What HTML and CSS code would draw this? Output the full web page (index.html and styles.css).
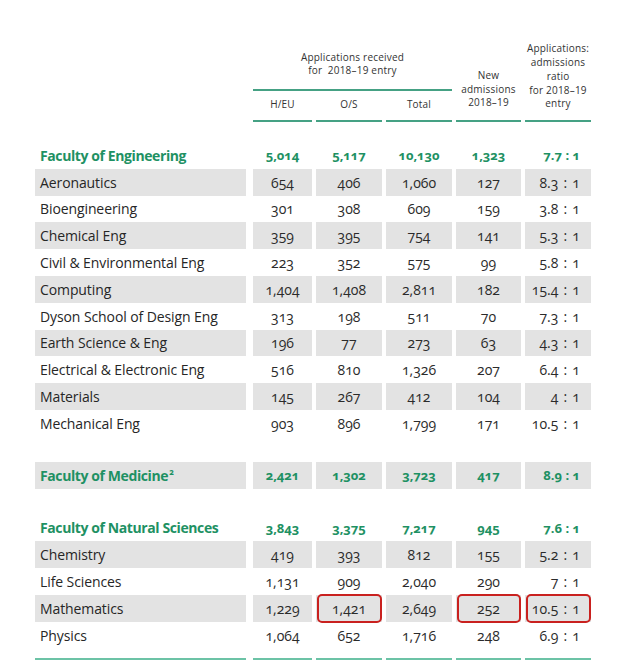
FILE: index.html
```html
<!DOCTYPE html>
<html>
<head>
<meta charset="utf-8">
<link rel="stylesheet" href="styles.css">
</head>
<body>
<div class="sheet">
  <div class="head">
    <div class="h-apps">Applications received<br>for&nbsp; 2018–19 entry</div>
    <div class="h-new">New<br>admissions<br>2018–19</div>
    <div class="h-ratio">Applications:<br>admissions<br>ratio<br>for 2018–19<br>entry</div>
    <div class="h-sub">H/EU</div>
    <div class="h-sub">O/S</div>
    <div class="h-sub">Total</div>
  </div>

  <div class="group first">
    <div class="row fac"><span class="lab">Faculty of Engineering</span><span>5,014</span><span>5,117</span><span>10,130</span><span>1,323</span><span class="r">7.7 : 1</span></div>
    <div class="row g"><span class="lab">Aeronautics</span><span>654</span><span>406</span><span>1,060</span><span>127</span><span class="r">8.3 : 1</span></div>
    <div class="row"><span class="lab">Bioengineering</span><span>301</span><span>308</span><span>609</span><span>159</span><span class="r">3.8 : 1</span></div>
    <div class="row g"><span class="lab">Chemical Eng</span><span>359</span><span>395</span><span>754</span><span>141</span><span class="r">5.3 : 1</span></div>
    <div class="row"><span class="lab">Civil &amp; Environmental Eng</span><span>223</span><span>352</span><span>575</span><span>99</span><span class="r">5.8 : 1</span></div>
    <div class="row g"><span class="lab">Computing</span><span>1,404</span><span>1,408</span><span>2,811</span><span>182</span><span class="r">15.4 : 1</span></div>
    <div class="row"><span class="lab">Dyson School of Design Eng</span><span>313</span><span>198</span><span>511</span><span>70</span><span class="r">7.3 : 1</span></div>
    <div class="row g"><span class="lab">Earth Science &amp; Eng</span><span>196</span><span>77</span><span>273</span><span>63</span><span class="r">4.3 : 1</span></div>
    <div class="row"><span class="lab">Electrical &amp; Electronic Eng</span><span>516</span><span>810</span><span>1,326</span><span>207</span><span class="r">6.4 : 1</span></div>
    <div class="row g"><span class="lab">Materials</span><span>145</span><span>267</span><span>412</span><span>104</span><span class="r">4 : 1</span></div>
    <div class="row"><span class="lab">Mechanical Eng</span><span>903</span><span>896</span><span>1,799</span><span>171</span><span class="r">10.5 : 1</span></div>
  </div>

  <div class="group med">
    <div class="row fac g"><span class="lab">Faculty of Medicine<sup>2</sup></span><span>2,421</span><span>1,302</span><span>3,723</span><span>417</span><span class="r">8.9 : 1</span></div>
  </div>

  <div class="group nat">
    <div class="row fac"><span class="lab">Faculty of Natural Sciences</span><span>3,843</span><span>3,375</span><span>7,217</span><span>945</span><span class="r">7.6 : 1</span></div>
    <div class="row g"><span class="lab">Chemistry</span><span>419</span><span>393</span><span>812</span><span>155</span><span class="r">5.2 : 1</span></div>
    <div class="row"><span class="lab">Life Sciences</span><span>1,131</span><span>909</span><span>2,040</span><span>290</span><span class="r">7 : 1</span></div>
    <div class="row g"><span class="lab">Mathematics</span><span>1,229</span><span class="mark">1,421</span><span>2,649</span><span class="mark">252</span><span class="r mark">10.5 : 1</span></div>
    <div class="row"><span class="lab">Physics</span><span>1,064</span><span>652</span><span>1,716</span><span>248</span><span class="r">6.9 : 1</span></div>
  </div>

  <div class="foot">
    <span class="blank"></span><span></span><span></span><span></span><span></span><span></span>
  </div>
</div>
</body>
</html>
```

FILE: styles.css
```css
html, body {
  margin: 0;
  padding: 0;
  background: #ffffff;
}

body {
  font-family: "Open Sans", "Noto Sans", sans-serif;
  color: #2b2b2b;
  width: 624px;
  height: 664px;
  overflow: hidden;
}

.sheet {
  padding: 40px 0 0 35px;
}

.head,
.row,
.foot {
  display: grid;
  grid-template-columns: 211px 62px 66px 66px 65px 66px;
  column-gap: 4px;
}

.head {
  grid-template-rows: 51px 31px;
  font-size: 10px;
  line-height: 13.7px;
  letter-spacing: 0.2px;
  text-align: center;
  color: #333;
}

.head > div {
  align-self: end;
}

.h-apps {
  grid-column: 2 / 5;
  grid-row: 1;
  margin-left: 3px;
  padding-bottom: 11px;
  border-bottom: 2px solid #45a184;
}

.h-new {
  grid-column: 5;
  grid-row: 1 / 3;
  padding-bottom: 10px;
  border-bottom: 2px solid #45a184;
}

.h-ratio {
  grid-column: 6;
  grid-row: 1 / 3;
  padding-bottom: 9px;
  border-bottom: 2px solid #45a184;
}

.h-sub {
  grid-row: 2;
  padding-bottom: 8px;
  border-bottom: 2px solid #45a184;
}

.h-sub:nth-of-type(4) {
  grid-column: 2;
  margin-left: 3px;
}

.h-sub:nth-of-type(5) {
  grid-column: 3;
}

.h-sub:nth-of-type(6) {
  grid-column: 4;
}

.group.first {
  margin-top: 20px;
}

.group.med {
  margin-top: 25px;
}

.group.nat {
  margin-top: 26px;
}

.row {
  height: 26.8px;
  font-size: 14px;
  font-variant-numeric: oldstyle-nums;
}

.row > span {
  display: flex;
  align-items: center;
  justify-content: center;
  position: relative;
}

.row > span:nth-child(2) {
  margin-left: 3px;
}

.row .lab {
  justify-content: flex-start;
  padding-left: 5px;
  font-size: 14px;
  letter-spacing: -0.1px;
  color: #262626;
}

.row .r {
  justify-content: flex-end;
  padding-right: 11px;
  word-spacing: 1.5px;
  white-space: pre;
}

.row.g > span {
  background: #e3e3e3;
}

.row.fac > span {
  color: #1e9163;
  font-weight: 700;
  font-size: 13px;
}

.row.fac > .r {
  word-spacing: 0;
}

.row.fac .lab {
  font-size: 14px;
  letter-spacing: -0.4px;
}

.row.fac sup {
  font-size: 8px;
  line-height: 0;
  margin-left: 1px;
  align-self: center;
  position: relative;
  top: -3px;
}

.mark::after {
  content: "";
  position: absolute;
  inset: -1px 0 -1px 1px;
  border: 2.5px solid #c9211f;
  border-radius: 5px;
}

.foot {
  margin-top: 9px;
}

.foot > span {
  height: 2px;
  background: #6cc3a6;
}

.foot > span:nth-child(2) {
  margin-left: 3px;
}
```
